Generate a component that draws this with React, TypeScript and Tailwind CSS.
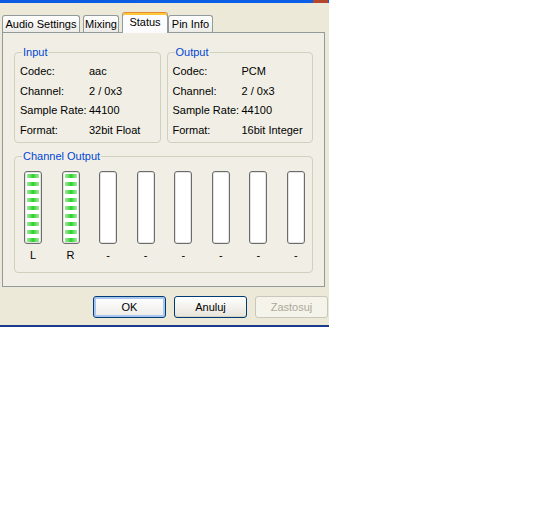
const inputRows = [
  ["Codec:", "aac"],
  ["Channel:", "2 / 0x3"],
  ["Sample Rate:", "44100"],
  ["Format:", "32bit Float"],
];

const outputRows = [
  ["Codec:", "PCM"],
  ["Channel:", "2 / 0x3"],
  ["Sample Rate:", "44100"],
  ["Format:", "16bit Integer"],
];

const channels = [
  { label: "L", active: true },
  { label: "R", active: true },
  { label: "-", active: false },
  { label: "-", active: false },
  { label: "-", active: false },
  { label: "-", active: false },
  { label: "-", active: false },
  { label: "-", active: false },
];

function GroupBox({
  title,
  className = "",
  children,
}: {
  title: string;
  className?: string;
  children: React.ReactNode;
}) {
  return (
    <div className={`relative rounded-[4px] border border-[#D0D0BF] ${className}`}>
      <span className="absolute -top-[7px] left-[7px] bg-[#F1EFE5] px-[1px] leading-[13px] text-[#0046D5]">
        {title}
      </span>
      {children}
    </div>
  );
}

function InfoRows({ rows }: { rows: string[][] }) {
  return (
    <div className="grid grid-cols-[69px_1fr] pl-[5px] pt-[9px] leading-[19.5px]">
      {rows.map(([k, v], i) => (
        <div key={i} className="contents">
          <span>{k}</span>
          <span>{v}</span>
        </div>
      ))}
    </div>
  );
}

function Meter({ active }: { active: boolean }) {
  return (
    <div className="flex h-[73px] w-[18px] flex-col gap-[4px] rounded-[3px] border border-[#6B6B6B] bg-white px-[2px] pt-[2px] shadow-[inset_0_0_0_1px_#E4E4E4]">
      {active &&
        Array.from({ length: 9 }).map((_, i) => (
          <div
            key={i}
            className="h-[4px] w-full bg-gradient-to-r from-[#9BEA9B] via-[#1FD21F] to-[#9BEA9B]"
          />
        ))}
    </div>
  );
}

function Tab({
  label,
  selected,
  className = "",
}: {
  label: string;
  selected?: boolean;
  className?: string;
}) {
  if (selected) {
    return (
      <div
        className={`relative z-10 flex h-[21px] items-center justify-center rounded-t-[3px] border border-b-0 border-[#919B9C] border-t-[#E68B2C] bg-[#FCFCFE] pb-[2px] shadow-[inset_0_2px_0_#FFC83C] ${className}`}
      >
        {label}
      </div>
    );
  }
  return (
    <div
      className={`mb-px flex h-[17px] items-center justify-center rounded-t-[3px] border border-b-0 border-[#919B9C] bg-gradient-to-b from-white to-[#ECEBE6] ${className}`}
    >
      {label}
    </div>
  );
}

function Button({
  label,
  variant,
}: {
  label: string;
  variant: "default" | "normal" | "disabled";
}) {
  const styles = {
    default:
      "border-[#003C74] bg-gradient-to-b from-white to-[#ECEBE6] shadow-[inset_0_0_0_2px_#A9C6F2]",
    normal:
      "border-[#003C74] bg-gradient-to-b from-white to-[#E6E4DA] shadow-[inset_0_-1px_0_#D6D0C5]",
    disabled: "border-[#C9C7BA] bg-[#F5F4EA] text-[#ACA899]",
  };
  return (
    <button
      className={`flex h-[22px] w-[73px] items-center justify-center rounded-[3px] border ${styles[variant]}`}
    >
      {label}
    </button>
  );
}

export default function App() {
  return (
    <div className="h-[516px] w-[533px] bg-white font-['Liberation_Sans',Arial,sans-serif] text-[11px] text-black">
      <div className="w-[329px]">
        {/* title bar remnant */}
        <div className="relative h-[3px] bg-gradient-to-r from-[#0A5BE0] to-[#0C5FE8]">
          <span className="absolute right-[1px] top-0 h-[3px] w-[15px] bg-[#B5462E]" />
        </div>

        <div className="bg-[#ECE9D8] pb-[7px] pt-[9px]">
          {/* tabs */}
          <div className="-mb-px flex h-[21px] items-end pl-[2px]">
            <Tab label="Audio Settings" className="w-[78px]" />
            <Tab label="Mixing" className="ml-[3px] w-[36px]" />
            <Tab label="Status" selected className="ml-[3px] w-[46px]" />
            <Tab label="Pin Info" className="w-[45px]" />
          </div>

          {/* tab panel */}
          <div className="ml-[2px] h-[255px] w-[323px] border border-[#919B9C] bg-[#F1EFE5] px-[11px] pt-[19px]">
            <div className="grid grid-cols-2 gap-[6px]">
              <GroupBox title="Input" className="h-[91px]">
                <InfoRows rows={inputRows} />
              </GroupBox>
              <GroupBox title="Output" className="h-[91px]">
                <InfoRows rows={outputRows} />
              </GroupBox>
            </div>

            <GroupBox title="Channel Output" className="mt-[13px] h-[117px]">
              <div className="flex justify-between pl-[9px] pr-[7px] pt-[14px]">
                {channels.map((c, i) => (
                  <div key={i} className="flex flex-col items-center">
                    <Meter active={c.active} />
                    <span className="mt-[5px] leading-[13px]">{c.label}</span>
                  </div>
                ))}
              </div>
            </GroupBox>
          </div>

          {/* buttons */}
          <div className="mt-[9px] flex justify-end gap-[8px] pr-[1px]">
            <Button label="OK" variant="default" />
            <Button label="Anuluj" variant="normal" />
            <Button label="Zastosuj" variant="disabled" />
          </div>
        </div>

        <div className="h-[2px] bg-[#1B3A8C]" />
      </div>
    </div>
  );
}
